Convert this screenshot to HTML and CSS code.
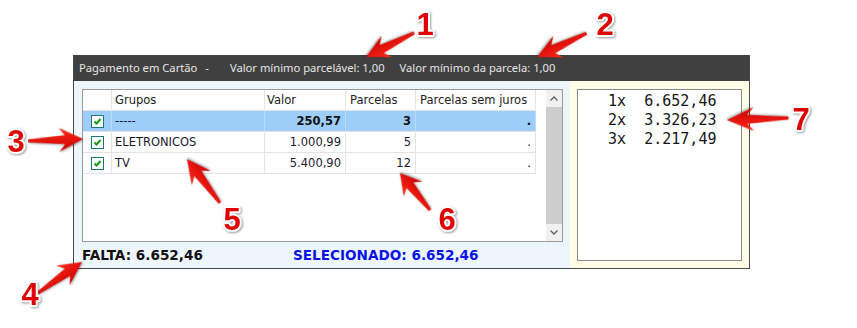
FILE: index.html
```html
<!DOCTYPE html>
<html>

<head>
    <title>Pagamento em Cartão</title>
    <meta charset="utf-8">
    <link rel="stylesheet" href="styles.css">
</head>

<body>

    <div class="window">
        <div class="titlebar">
            <span>Pagamento em Cartão</span>
            <span class="sep">-</span>
            <span class="min-total">Valor mínimo parcelável: 1,00</span>
            <span class="min-parcel">Valor mínimo da parcela: 1,00</span>
        </div>

        <div class="content">
            <div class="groups">
                <div class="grid">
                    <table>
                        <tr class="head">
                            <td class="col-check"></td>
                            <td class="col-group">Grupos</td>
                            <td class="col-value">Valor</td>
                            <td class="col-parcels">Parcelas</td>
                            <td class="col-free">Parcelas sem juros</td>
                        </tr>
                        <tr class="selected">
                            <td class="col-check"><span class="check"></span></td>
                            <td class="col-group">-----</td>
                            <td class="col-value num">250,57</td>
                            <td class="col-parcels num">3</td>
                            <td class="col-free num">.</td>
                        </tr>
                        <tr>
                            <td class="col-check"><span class="check"></span></td>
                            <td class="col-group">ELETRONICOS</td>
                            <td class="col-value num">1.000,99</td>
                            <td class="col-parcels num">5</td>
                            <td class="col-free num">.</td>
                        </tr>
                        <tr>
                            <td class="col-check"><span class="check"></span></td>
                            <td class="col-group">TV</td>
                            <td class="col-value num">5.400,90</td>
                            <td class="col-parcels num">12</td>
                            <td class="col-free num">.</td>
                        </tr>
                    </table>
                    <!-- vertical scrollbar -->
                    <div class="scrollbar">
                        <div class="arrow">
                            <svg width="8" height="5" viewBox="0 0 8 5"><path d="M0.5 4.5 L4 1 L7.5 4.5" /></svg>
                        </div>
                        <div class="thumb"></div>
                        <div class="arrow">
                            <svg width="8" height="5" viewBox="0 0 8 5"><path d="M0.5 0.5 L4 4 L7.5 0.5" /></svg>
                        </div>
                    </div>
                </div>
                <div class="totals">
                    <span class="falta">FALTA: 6.652,46</span>
                    <span class="selecionado">SELECIONADO: 6.652,46</span>
                </div>
            </div>

            <div class="plans">
                <pre class="installments">   1x  6.652,46
   2x  3.326,23
   3x  2.217,49</pre>
            </div>
        </div>
    </div>

    <!-- annotation arrows over the screenshot -->
    <svg class="notes" width="857" height="328" viewBox="0 0 857 328">
        <defs>
            <linearGradient id="red" x1="0" y1="0" x2="0" y2="1">
                <stop offset="0" stop-color="#ff2a1a" />
                <stop offset="1" stop-color="#c80000" />
            </linearGradient>
            <path id="arrow" d="M0,0 L-24,-12 L-18,-4.5 L-55,-1.5 L-55,1.5 L-18,4.5 L-24,12 Z" />
        </defs>
        <g class="arrows">
            <use href="#arrow" transform="translate(366,57) rotate(153.4) scale(0.98,1)" />
            <use href="#arrow" transform="translate(537,57) rotate(154.4)" />
            <use href="#arrow" transform="translate(83,139) rotate(-2)" />
            <use href="#arrow" transform="translate(82,262) rotate(-35.2) scale(0.98,1)" />
            <use href="#arrow" transform="translate(187,159) rotate(-126.9)" />
            <use href="#arrow" transform="translate(400,173) rotate(-129) scale(0.87,1)" />
            <use href="#arrow" transform="translate(727,120) rotate(178.2) scale(1.12,1)" />
        </g>
        <g class="numbers">
            <text x="425" y="35">1</text>
            <text x="605" y="35">2</text>
            <text x="16" y="152">3</text>
            <text x="30" y="305">4</text>
            <text x="232" y="230">5</text>
            <text x="447" y="230">6</text>
            <text x="801" y="130">7</text>
        </g>
    </svg>

</body>

</html>
```

FILE: styles.css
```css
body {
    margin: 0;
    width: 857px;
    height: 328px;
    overflow: hidden;
    background: white;
    position: relative;
}

.window {
    margin: 55px 0 0 73px;
    width: 675px;
    border: 1px solid #4a4a4a;
    border-top: none;
}

.titlebar {
    height: 26px;
    line-height: 26px;
    background: #404040;
    color: #e6e6e6;
    font-family: "Noto Sans", sans-serif;
    font-size: 11.2px;
    padding-left: 5px;
    display: flex;
    white-space: nowrap;
}

.titlebar .sep {
    margin-left: 8px;
}

.titlebar .min-total {
    margin-left: 21px;
}

.titlebar .min-parcel {
    margin-left: 15px;
}

.content {
    display: flex;
    height: 187px;
}

.groups {
    width: 481px;
    padding: 8px 7px 0 8px;
    background: #eef6fd;
    display: flex;
    flex-direction: column;
}

.grid {
    height: 151px;
    border: 1px solid #9a9a9a;
    background: white;
    display: flex;
    justify-content: space-between;
}

table {
    border-collapse: collapse;
    font-family: "DejaVu Sans", sans-serif;
    font-size: 11.5px;
    color: #1a1a2e;
    height: fit-content;
}

td {
    height: 20px;
    padding: 0 4px;
    border-right: 1px solid #e4e4e4;
    border-bottom: 1px solid #e4e4e4;
    white-space: nowrap;
}

.col-check {
    width: 28px;
    padding: 0;
    text-align: center;
}

.col-group {
    width: 145px;
    padding-left: 3px;
}

.col-value {
    width: 74px;
    padding-left: 2px;
}

.col-parcels {
    width: 61px;
}

.col-free {
    width: 111px;
}

.num {
    text-align: right;
}

tr.head td {
    color: #222;
}

tr.selected td {
    background: #9dcdf9;
    border-right-color: #b9dbfa;
}

tr.selected td.num {
    font-weight: bold;
    color: #111;
}

.check {
    display: inline-block;
    width: 11px;
    height: 11px;
    border: 1px solid #1f7474;
    background: white url("data:image/svg+xml;utf8,<svg xmlns='http://www.w3.org/2000/svg' viewBox='0 0 11 11'><path d='M2.5 5.5 L4.5 7.5 L8.5 3' fill='none' stroke='%23119911' stroke-width='2'/></svg>") no-repeat center;
    vertical-align: middle;
}

.scrollbar {
    width: 16px;
    background: #f0f0f0;
    display: flex;
    flex-direction: column;
}

.scrollbar .arrow {
    height: 17px;
    display: flex;
    align-items: center;
    justify-content: center;
}

.scrollbar .arrow path {
    fill: none;
    stroke: #606060;
    stroke-width: 1.3;
}

.scrollbar .thumb {
    flex: 1;
    background: #cdcdcd;
}

.totals {
    flex: 1;
    display: flex;
    align-items: center;
    font-family: "DejaVu Sans", sans-serif;
    font-weight: bold;
    font-size: 13.6px;
    padding-bottom: 1px;
}

.falta {
    color: #111;
}

.selecionado {
    color: #0a14e6;
    margin-left: 90px;
}

.plans {
    flex: 1;
    background: #fffde6;
    padding: 8px 7px 7px 7px;
    display: flex;
}

.installments {
    flex: 1;
    margin: 0;
    border: 1px solid #8a8a8a;
    background: white;
    font-family: "DejaVu Sans Mono", monospace;
    font-size: 15px;
    line-height: 19px;
    padding: 2px 3px;
    color: #151515;
}

.notes {
    position: absolute;
    left: 0;
    top: 0;
    pointer-events: none;
}

.arrows use {
    fill: url(#red);
    filter: drop-shadow(1px 1px 1px rgba(0, 0, 0, 0.35));
}

.numbers text {
    font-family: "Liberation Sans", sans-serif;
    font-weight: bold;
    font-size: 31px;
    text-anchor: middle;
    fill: #e00000;
    stroke: white;
    stroke-width: 4px;
    stroke-linejoin: round;
    paint-order: stroke;
    filter: drop-shadow(1px 1px 1px rgba(0, 0, 0, 0.4));
}
```
